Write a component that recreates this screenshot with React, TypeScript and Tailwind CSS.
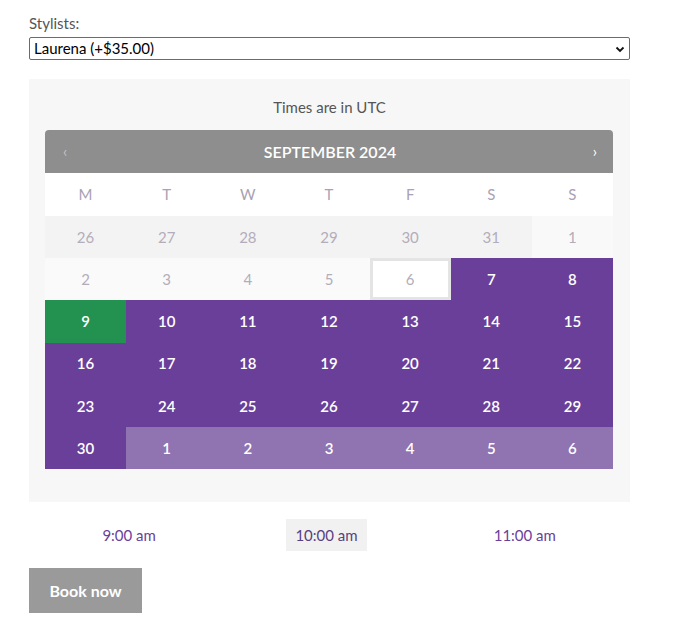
import React from 'react';

type Cell = { d: number; kind: 'past' | 'pastLight' | 'plain' | 'today' | 'open' | 'selected' | 'next' };

const weeks: Cell[][] = [
  [26, 27, 28, 29, 30, 31].map((d) => ({ d, kind: 'past' as const })).concat([{ d: 1, kind: 'pastLight' }]),
  [
    { d: 2, kind: 'plain' },
    { d: 3, kind: 'plain' },
    { d: 4, kind: 'plain' },
    { d: 5, kind: 'plain' },
    { d: 6, kind: 'today' },
    { d: 7, kind: 'open' },
    { d: 8, kind: 'open' },
  ],
  [{ d: 9, kind: 'selected' as const }].concat([10, 11, 12, 13, 14, 15].map((d) => ({ d, kind: 'open' as const }))),
  [16, 17, 18, 19, 20, 21, 22].map((d) => ({ d, kind: 'open' as const })),
  [23, 24, 25, 26, 27, 28, 29].map((d) => ({ d, kind: 'open' as const })),
  [{ d: 30, kind: 'open' as const }].concat([1, 2, 3, 4, 5, 6].map((d) => ({ d, kind: 'next' as const }))),
];

const cellClass = (kind: Cell['kind']) => {
  switch (kind) {
    case 'past':
      return 'bg-[#f3f3f3] text-[#b3adbb]';
    case 'pastLight':
      return 'bg-[#f9f9f9] text-[#b3adbb]';
    case 'plain':
      return 'bg-[#fafafa] text-[#b3adbb]';
    case 'today':
      return 'bg-white text-[#b3adbb] border-[3px] border-[#e4e4e4]';
    case 'open':
      return 'bg-[#6a3f9a] text-white font-semibold';
    case 'selected':
      return 'bg-[#23914f] text-white font-semibold';
    case 'next':
      return 'bg-[#8f74b1] text-white font-semibold';
  }
};

const App: React.FC = () => {
  const days = ['M', 'T', 'W', 'T', 'F', 'S', 'S'];

  return (
    <div className="w-[685px] h-[624px] bg-white pl-[29px] pt-[13px]" style={{ fontFamily: 'Lato, "Noto Sans", sans-serif' }}>
      <div className="w-[601px]">
        <label className="block text-[15px] leading-[20px] text-[#555]">Stylists:</label>
        <div className="mt-[4px] h-[23px] border border-[#6b6b6b] rounded-[2px] flex items-center justify-between pl-[4px] pr-[4px] text-[15px] text-black">
          <span>Laurena (+$35.00)</span>
          <svg width="10" height="10" viewBox="0 0 10 10" fill="none">
            <path d="M1.5 3.5 L5 7 L8.5 3.5" stroke="#111" strokeWidth="1.8" />
          </svg>
        </div>

        <div className="mt-[19px] bg-[#f7f7f7] px-[16px] pt-[16px] pb-[33px]">
          <p className="text-center text-[15px] leading-[24px] text-[#555]">Times are in UTC</p>

          <div className="mt-[11px] w-[568px]">
            <div className="h-[43px] bg-[#8e8e8e] rounded-t-[4px] flex items-center justify-between pl-[18px] pr-[16px]">
              <span className="text-[#c4c4c4] text-[15px] w-[10px]">‹</span>
              <span className="text-white font-semibold text-[16px]">SEPTEMBER 2024</span>
              <span className="text-white text-[15px] w-[10px] text-right">›</span>
            </div>
            <div className="grid grid-cols-7 bg-white h-[43px]">
              {days.map((d, i) => (
                <div key={i} className="flex items-center justify-center text-[15px] text-[#a9a1b5]">
                  {d}
                </div>
              ))}
            </div>
            {weeks.map((week, wi) => (
              <div key={wi} className="grid grid-cols-7 h-[42.2px]">
                {week.map((c, ci) => (
                  <div key={ci} className={`flex items-center justify-center text-[15px] ${cellClass(c.kind)}`}>
                    {c.d}
                  </div>
                ))}
              </div>
            ))}
          </div>
        </div>

        <div className="mt-[17px] grid grid-cols-3 h-[32px] text-[15px] text-[#6a3f9a]">
          <div className="flex items-center justify-center">9:00 am</div>
          <div className="flex items-center justify-center">
            <span className="bg-[#f1f1f1] h-[32px] px-[9px] flex items-center text-[#5a3f80] -ml-[6px]">10:00 am</span>
          </div>
          <div className="flex items-center justify-center -ml-[10px]">11:00 am</div>
        </div>

        <button className="mt-[17px] w-[113px] h-[45px] bg-[#9a9a9a] text-white font-bold text-[16px]">
          Book now
        </button>
      </div>
    </div>
  );
};

export default App;
